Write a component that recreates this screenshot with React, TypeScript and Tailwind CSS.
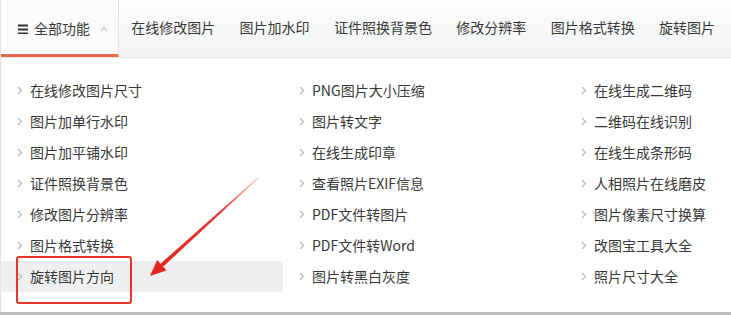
const tabs = ['在线修改图片', '图片加水印', '证件照换背景色', '修改分辨率', '图片格式转换', '旋转图片']

const columns = [
  ['在线修改图片尺寸', '图片加单行水印', '图片加平铺水印', '证件照换背景色', '修改图片分辨率', '图片格式转换', '旋转图片方向'],
  ['PNG图片大小压缩', '图片转文字', '在线生成印章', '查看照片EXIF信息', 'PDF文件转图片', 'PDF文件转Word', '图片转黑白灰度'],
  ['在线生成二维码', '二维码在线识别', '在线生成条形码', '人相照片在线磨皮', '图片像素尺寸换算', '改图宝工具大全', '照片尺寸大全'],
]

const Chevron = () => (
  <svg width="6" height="9" viewBox="0 0 6 9" className="shrink-0">
    <path d="M1 1l3.5 3.5L1 8" fill="none" stroke="#b5b5b5" strokeWidth="1.1" />
  </svg>
)

export default function App() {
  return (
    <div className="relative h-[315px] w-[731px] overflow-hidden bg-white font-['Microsoft_YaHei','Noto_Sans_CJK_SC',sans-serif] text-[14px] text-[#383838]">
      <div className="flex h-[312px] flex-col border-l border-[#e2e2e2]">
        <nav className="flex h-[58px] shrink-0 border-b border-[#e6e7e8] bg-gradient-to-b from-[#fdfdfd] to-[#f2f3f4]">
          <div className="flex w-[118px] shrink-0 items-center border-r border-b-[3px] border-r-[#e2e2e2] border-b-[#e0694a] bg-[#fbfbfb] pl-[17px] pt-[3px]">
            <svg width="10" height="10" viewBox="0 0 10 10" className="mr-[6px]">
              <rect x="0" y="0.5" width="10" height="2" fill="#333" />
              <rect x="0" y="4.5" width="10" height="2" fill="#333" />
              <rect x="0" y="8.5" width="10" height="2" fill="#333" />
            </svg>
            <span>全部功能</span>
            <svg width="8" height="6" viewBox="0 0 8 6" className="ml-[10px]">
              <path d="M1 5l3-3.5L7 5" fill="none" stroke="#b8b8b8" strokeWidth="1.1" />
            </svg>
          </div>
          {tabs.map(t => (
            <div key={t} className="flex items-center whitespace-nowrap px-[12.2px] pb-[3px]">
              {t}
            </div>
          ))}
        </nav>
        <div className="grid grid-cols-[282px_282px_1fr] pt-[17px]">
          {columns.map((col, ci) => (
            <div key={ci} className="flex flex-col">
              {col.map(item => (
                <div
                  key={item}
                  className={`flex h-[31px] items-center gap-[7px] pl-[16px] whitespace-nowrap ${item === '旋转图片方向' ? 'bg-[#efeff0]' : ''}`}
                >
                  <Chevron />
                  <span>{item}</span>
                </div>
              ))}
            </div>
          ))}
        </div>
      </div>
      <div className="h-[3px] bg-[#bdbdbd]" />

      {/* annotation */}
      <div className="absolute left-[16px] top-[256px] h-[48px] w-[116px] rounded-[3px] border-2 border-[#e8352c]" />
      <svg className="pointer-events-none absolute left-0 top-0" width="731" height="315">
        <defs>
          <linearGradient id="ar" x1="258" y1="178" x2="160" y2="266" gradientUnits="userSpaceOnUse">
            <stop offset="0" stopColor="#f7c2be" />
            <stop offset="0.4" stopColor="#e8352c" />
            <stop offset="1" stopColor="#e3261e" />
          </linearGradient>
        </defs>
        <polygon points="258.3,178.4 257.7,177.6 160.5,263.8 163.1,266.7" fill="url(#ar)" />
        <polygon points="150,276 157.1,260.1 166.5,270.4" fill="#e3261e" />
      </svg>
    </div>
  )
}
